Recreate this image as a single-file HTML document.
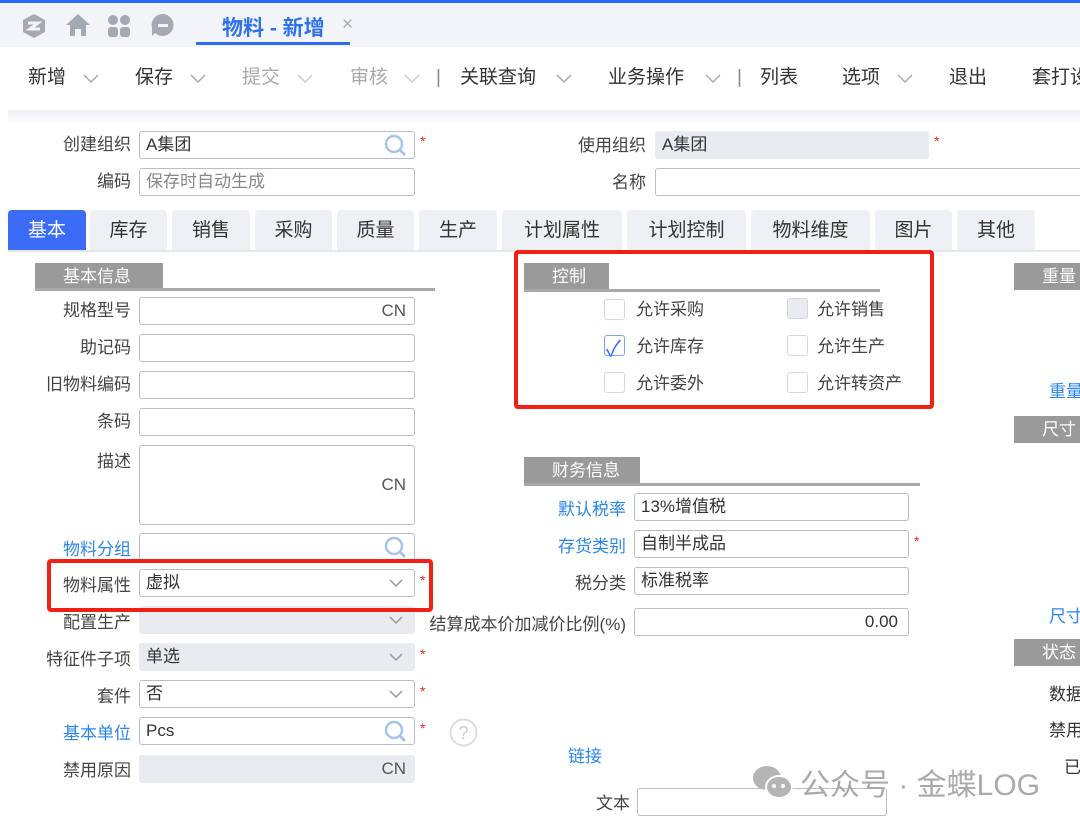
<!DOCTYPE html>
<html><head><meta charset="utf-8"><style>
*{box-sizing:border-box;margin:0;padding:0}
body{width:1080px;height:825px;overflow:hidden;background:#fff;font-family:"Liberation Sans","Noto Sans CJK SC",sans-serif;font-size:17px;color:#333;position:relative}
.a{position:absolute;white-space:nowrap}
.inp{position:absolute;height:28px;border:1px solid #b8bdcc;border-radius:3px;background:#fff;font-size:17px;padding-left:6px;line-height:26px}
.g{background:#e9ebf0;border-color:#e9ebf0}
.lbl{position:absolute;text-align:right;font-size:17px;color:#444;line-height:28px;white-space:nowrap}
.blue{color:#2a86e8}
.star{position:absolute;color:#e22;font-size:14px}
.hdr{position:absolute;background:#9a9a9a;color:#fff;font-size:17px;line-height:27px;padding-left:22px;height:27px;white-space:nowrap;overflow:hidden}
.hl{position:absolute;height:3px;background:#a8a8a8}
.tab{position:absolute;top:210px;height:40px;background:#eef0f5;border-radius:4px 4px 0 0;text-align:center;line-height:42px;font-size:19px;color:#333}
.cb{position:absolute;width:21px;height:21px;border:1px solid #d4d7de;border-radius:3px;background:#fff}
.ck{position:absolute;font-size:17px;color:#444;line-height:21px;white-space:nowrap}
.tb{position:absolute;top:66px;font-size:19px;color:#333;line-height:24px;white-space:nowrap}
.dis{color:#aaa}
.red{position:absolute;border:4px solid #f02015;border-radius:4px}
.tc{position:absolute;top:74px}
</style></head><body>
<div class="a" style="left:0;top:0;width:1080px;height:3px;background:#2c6bf2"></div>
<div class="a" style="left:0;top:3px;width:1080px;height:44px;background:#f3f4f8"></div>
<svg class="a" style="left:20px;top:12px" width="28" height="28" viewBox="0 0 28 28"><path d="M14 2 L25 8 V20 L14 26 L3 20 V8Z" fill="#a4a9b3"/><path d="M8 11h10l-8 6h10" stroke="#f3f4f8" stroke-width="3" fill="none"/></svg>
<svg class="a" style="left:64px;top:12px" width="28" height="26" viewBox="0 0 28 26"><path d="M14 2 L26 13 H22 V24 H17 V17 H11 V24 H6 V13 H2Z" fill="#a4a9b3"/></svg>
<svg class="a" style="left:106px;top:13px" width="26" height="26"><circle cx="7" cy="7" r="5" fill="#a4a9b3"/><circle cx="19" cy="7" r="5" fill="#a4a9b3"/><rect x="2" y="14" width="10" height="10" rx="3" fill="#a4a9b3"/><rect x="14" y="14" width="10" height="10" rx="3" fill="#a4a9b3"/></svg>
<svg class="a" style="left:150px;top:12px" width="26" height="26"><path d="M13 2a11 11 0 1 1-8 19l-3 3v-8A11 11 0 0 1 13 2z" fill="#a4a9b3"/><rect x="8" y="12" width="10" height="3" fill="#f3f4f8"/></svg>
<div class="a" style="left:222px;top:12px;font-size:21px;font-weight:bold;color:#2d72ea">物料 - 新增</div>
<div class="a" style="left:342px;top:14px;font-size:19px;color:#aaa">×</div>
<div class="a" style="left:196px;top:42px;width:154px;height:3px;background:#2c6bf2"></div>
<div class="tb" style="left:28px">新增</div>
<div class="tb" style="left:135px">保存</div>
<div class="tb dis" style="left:242px">提交</div>
<div class="tb dis" style="left:350px">审核</div>
<div class="tb" style="left:436px;color:#888">|</div>
<div class="tb" style="left:460px">关联查询</div>
<div class="tb" style="left:608px">业务操作</div>
<div class="tb" style="left:737px;color:#888">|</div>
<div class="tb" style="left:760px">列表</div>
<div class="tb" style="left:842px">选项</div>
<div class="tb" style="left:949px">退出</div>
<div class="tb" style="left:1032px">套打设</div>
<svg class="tc" style="left:83px" width="16" height="10"><path d="M1 1l7 7 7-7" stroke="#aaa" stroke-width="1.5" fill="none"/></svg>
<svg class="tc" style="left:190px" width="16" height="10"><path d="M1 1l7 7 7-7" stroke="#aaa" stroke-width="1.5" fill="none"/></svg>
<svg class="tc" style="left:297px" width="16" height="10"><path d="M1 1l7 7 7-7" stroke="#ccc" stroke-width="1.5" fill="none"/></svg>
<svg class="tc" style="left:404px" width="16" height="10"><path d="M1 1l7 7 7-7" stroke="#ccc" stroke-width="1.5" fill="none"/></svg>
<svg class="tc" style="left:556px" width="16" height="10"><path d="M1 1l7 7 7-7" stroke="#aaa" stroke-width="1.5" fill="none"/></svg>
<svg class="tc" style="left:705px" width="16" height="10"><path d="M1 1l7 7 7-7" stroke="#aaa" stroke-width="1.5" fill="none"/></svg>
<svg class="tc" style="left:897px" width="16" height="10"><path d="M1 1l7 7 7-7" stroke="#aaa" stroke-width="1.5" fill="none"/></svg>
<div class="a" style="left:8px;top:110px;width:1072px;height:14px;background:linear-gradient(#eef0f4,#fff)"></div>
<div class="lbl" style="left:30px;width:101px;top:131px">创建组织</div>
<div class="inp" style="left:139px;top:131px;width:276px">A集团</div>
<div class="lbl" style="left:30px;width:101px;top:168px">编码</div>
<div class="inp" style="left:139px;top:168px;width:276px;color:#888">保存时自动生成</div>
<div class="star" style="left:420px;top:133px">*</div>
<div class="lbl" style="left:540px;width:106px;top:132px">使用组织</div>
<div class="inp g" style="left:655px;top:131px;width:274px">A集团</div>
<div class="star" style="left:934px;top:133px">*</div>
<div class="lbl" style="left:540px;width:106px;top:169px">名称</div>
<div class="inp" style="left:655px;top:168px;width:440px"></div>
<div class="tab" style="left:8px;width:78px;background:#3c6cf5;color:#fff">基本</div>
<div class="tab" style="left:90px;width:77px">库存</div>
<div class="tab" style="left:172px;width:78px">销售</div>
<div class="tab" style="left:255px;width:77px">采购</div>
<div class="tab" style="left:337px;width:77px">质量</div>
<div class="tab" style="left:419px;width:78px">生产</div>
<div class="tab" style="left:502px;width:120px">计划属性</div>
<div class="tab" style="left:627px;width:119px">计划控制</div>
<div class="tab" style="left:751px;width:119px">物料维度</div>
<div class="tab" style="left:875px;width:77px">图片</div>
<div class="tab" style="left:957px;width:78px">其他</div>
<div class="a" style="left:8px;top:250px;width:1072px;height:2px;background:#e4e7ee"></div>
<div class="hdr" style="left:35px;top:263px;width:128px;padding-left:28px">基本信息</div>
<div class="hl" style="left:35px;top:288px;width:400px"></div>
<div class="lbl" style="left:20px;width:111px;top:297px">规格型号</div><div class="inp" style="left:139px;top:297px;width:276px;text-align:right;padding-right:8px;color:#555">CN</div>
<div class="lbl" style="left:20px;width:111px;top:334px">助记码</div><div class="inp" style="left:139px;top:334px;width:276px"></div>
<div class="lbl" style="left:20px;width:111px;top:371px">旧物料编码</div><div class="inp" style="left:139px;top:371px;width:276px"></div>
<div class="lbl" style="left:20px;width:111px;top:408px">条码</div><div class="inp" style="left:139px;top:408px;width:276px"></div>
<div class="lbl" style="left:20px;width:111px;top:448px">描述</div><div class="inp" style="left:139px;top:445px;width:276px;height:80px;text-align:right;padding-right:8px;padding-top:26px;color:#555">CN</div>
<div class="lbl blue" style="left:20px;width:111px;top:536px">物料分组</div><div class="inp" style="left:139px;top:533px;width:276px"></div>
<div class="lbl" style="left:20px;width:111px;top:572px">物料属性</div><div class="inp" style="left:139px;top:569px;width:276px">虚拟</div>
<div class="star" style="left:420px;top:572px">*</div>
<div class="lbl" style="left:20px;width:111px;top:609px">配置生产</div><div class="inp g" style="left:139px;top:606px;width:276px"></div>
<div class="lbl" style="left:20px;width:111px;top:646px">特征件子项</div><div class="inp g" style="left:139px;top:643px;width:276px">单选</div>
<div class="star" style="left:420px;top:646px">*</div>
<div class="lbl" style="left:20px;width:111px;top:683px">套件</div><div class="inp" style="left:139px;top:680px;width:276px">否</div>
<div class="star" style="left:420px;top:683px">*</div>
<div class="lbl blue" style="left:20px;width:111px;top:720px">基本单位</div><div class="inp" style="left:139px;top:717px;width:276px">Pcs</div>
<div class="star" style="left:420px;top:720px">*</div>
<svg class="a" style="left:449px;top:718px" width="29" height="29"><circle cx="14.5" cy="14.5" r="13" fill="none" stroke="#ddd" stroke-width="2"/><text x="14.5" y="21" text-anchor="middle" font-size="18" fill="#ccc" font-family="Liberation Sans">?</text></svg>
<div class="lbl" style="left:20px;width:111px;top:757px">禁用原因</div><div class="inp g" style="left:139px;top:755px;width:276px;text-align:right;padding-right:8px;color:#555">CN</div>
<svg class="a" style="left:383px;top:133px" width="26" height="24"><circle cx="11" cy="11" r="8" fill="none" stroke="#a9c4ea" stroke-width="2.5"/><path d="M17 17l5 5" stroke="#a9c4ea" stroke-width="3"/></svg>
<svg class="a" style="left:383px;top:535px" width="26" height="24"><circle cx="11" cy="11" r="8" fill="none" stroke="#a9c4ea" stroke-width="2.5"/><path d="M17 17l5 5" stroke="#a9c4ea" stroke-width="3"/></svg>
<svg class="a" style="left:383px;top:719px" width="26" height="24"><circle cx="11" cy="11" r="8" fill="none" stroke="#a9c4ea" stroke-width="2.5"/><path d="M17 17l5 5" stroke="#a9c4ea" stroke-width="3"/></svg>
<svg class="a" style="left:878px;top:495px" width="26" height="24"><circle cx="11" cy="11" r="8" fill="none" stroke="#a9c4ea" stroke-width="2.5"/><path d="M17 17l5 5" stroke="#a9c4ea" stroke-width="3"/></svg>
<svg class="a" style="left:878px;top:532px" width="26" height="24"><circle cx="11" cy="11" r="8" fill="none" stroke="#a9c4ea" stroke-width="2.5"/><path d="M17 17l5 5" stroke="#a9c4ea" stroke-width="3"/></svg>
<svg class="a" style="left:878px;top:569px" width="26" height="24"><circle cx="11" cy="11" r="8" fill="none" stroke="#a9c4ea" stroke-width="2.5"/><path d="M17 17l5 5" stroke="#a9c4ea" stroke-width="3"/></svg>
<svg class="a" style="left:389px;top:579px" width="14" height="9"><path d="M1 1l6 6 6-6" stroke="#999" stroke-width="1.5" fill="none"/></svg>
<svg class="a" style="left:389px;top:616px" width="14" height="9"><path d="M1 1l6 6 6-6" stroke="#999" stroke-width="1.5" fill="none"/></svg>
<svg class="a" style="left:389px;top:653px" width="14" height="9"><path d="M1 1l6 6 6-6" stroke="#999" stroke-width="1.5" fill="none"/></svg>
<svg class="a" style="left:389px;top:690px" width="14" height="9"><path d="M1 1l6 6 6-6" stroke="#999" stroke-width="1.5" fill="none"/></svg>
<div class="hdr" style="left:524px;top:263px;width:85px;padding-left:28px">控制</div>
<div class="hl" style="left:524px;top:289px;width:356px"></div>
<div class="cb" style="left:604px;top:299px"></div><div class="ck" style="left:636px;top:299px">允许采购</div>
<div class="cb" style="left:787px;top:298px;background:#e9ebf0"></div><div class="ck" style="left:817px;top:299px">允许销售</div>
<div class="cb" style="left:604px;top:335px;border-color:#7ea3f2"></div><div class="a" style="left:606px;top:331px;font-size:22px;color:#3c6cf5">✓</div><div class="ck" style="left:636px;top:336px">允许库存</div>
<div class="cb" style="left:787px;top:335px"></div><div class="ck" style="left:817px;top:336px">允许生产</div>
<div class="cb" style="left:604px;top:372px"></div><div class="ck" style="left:636px;top:373px">允许委外</div>
<div class="cb" style="left:787px;top:372px"></div><div class="ck" style="left:817px;top:373px">允许转资产</div>
<div class="hdr" style="left:524px;top:457px;width:116px;padding-left:28px">财务信息</div>
<div class="hl" style="left:524px;top:483px;width:396px"></div>
<div class="lbl blue" style="left:520px;width:106px;top:496px">默认税率</div><div class="inp" style="left:634px;top:493px;width:275px">13%增值税</div>
<div class="lbl blue" style="left:520px;width:106px;top:533px">存货类别</div><div class="inp" style="left:634px;top:530px;width:275px">自制半成品</div>
<div class="star" style="left:914px;top:533px">*</div>
<div class="lbl" style="left:520px;width:106px;top:570px">税分类</div><div class="inp" style="left:634px;top:567px;width:275px">标准税率</div>
<div class="lbl" style="left:400px;width:226px;top:611px">结算成本价加减价比例(%)</div><div class="inp" style="left:634px;top:608px;width:275px;text-align:right;padding-right:10px">0.00</div>
<div class="a blue" style="left:568px;top:742px">链接</div>
<div class="lbl" style="left:560px;width:70px;top:790px">文本</div><div class="inp" style="left:637px;top:788px;width:250px"></div>
<div class="hdr" style="left:1014px;top:263px;width:80px;padding-left:28px">重量</div>
<div class="a blue" style="left:1049px;top:377px">重量</div>
<div class="hdr" style="left:1014px;top:416px;width:80px;padding-left:28px">尺寸</div>
<div class="a blue" style="left:1049px;top:602px">尺寸</div>
<div class="hdr" style="left:1014px;top:639px;width:80px;padding-left:28px">状态</div>
<div class="a" style="left:1049px;top:680px">数据</div>
<div class="a" style="left:1049px;top:716px">禁用</div>
<div class="a" style="left:1064px;top:753px">已</div>
<div class="red" style="left:47px;top:559px;width:386px;height:53px"></div>
<div class="red" style="left:514px;top:250px;width:420px;height:159px"></div>
<svg class="a" style="left:752px;top:763px" width="42" height="38"><ellipse cx="15" cy="15" rx="14" ry="12" fill="#b5b5b5"/><ellipse cx="27" cy="24" rx="13" ry="11" fill="#b5b5b5" stroke="#fff" stroke-width="2"/><circle cx="22" cy="23" r="2" fill="#fff"/><circle cx="31" cy="23" r="2" fill="#fff"/></svg>
<div class="a" style="left:800px;top:760px;font-size:30px;color:#aaa">公众号 · 金蝶LOG</div>
</body></html>
